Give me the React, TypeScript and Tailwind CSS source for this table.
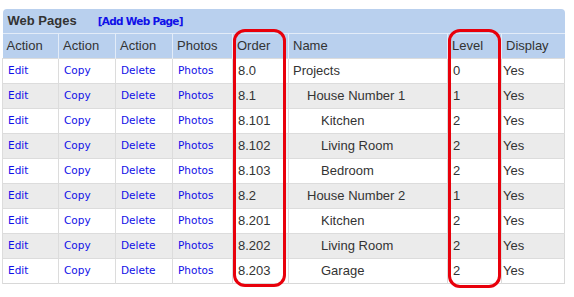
const rows = [
  { order: "8.0", name: "Projects", level: 0 },
  { order: "8.1", name: "House Number 1", level: 1 },
  { order: "8.101", name: "Kitchen", level: 2 },
  { order: "8.102", name: "Living Room", level: 2 },
  { order: "8.103", name: "Bedroom", level: 2 },
  { order: "8.2", name: "House Number 2", level: 1 },
  { order: "8.201", name: "Kitchen", level: 2 },
  { order: "8.202", name: "Living Room", level: 2 },
  { order: "8.203", name: "Garage", level: 2 },
]

const widths = ["w-[56px]", "w-[57px]", "w-[57px]", "w-[60px]", "w-[56px]", "w-[159px]", "w-[54px]", "w-[63px]"]
const headers = ["Action", "Action", "Action", "Photos", "Order", "Name", "Level", "Display"]

const link = "text-[#1010e8] font-['DejaVu_Sans',Verdana,sans-serif] text-[10.5px]"
const indent = ["pl-[4px]", "pl-[18px]", "pl-[32px]"]

export default function App() {
  return (
    <div className="w-[574px] h-[297px] bg-white pt-[9px] pl-[2px] font-['Liberation_Sans',Arial,sans-serif] text-[13px] text-[#333]">
      <div className="relative w-[562px]">
        <table className="w-[562px] table-fixed border-collapse">
          <colgroup>
            {widths.map((w, i) => (
              <col key={i} className={w} />
            ))}
          </colgroup>
          <thead>
            <tr className="h-[24px] bg-[#b9d0ee]">
              <th colSpan={8} className="text-left font-normal rounded-t-[4px] px-[5px]">
                <span className="font-bold text-[13px] text-[#333]">Web Pages</span>
                <span className={`${link} font-bold tracking-[-0.7px] ml-[21px]`}>[Add Web Page]</span>
              </th>
            </tr>
            <tr className="h-[25px] bg-[#b9d0ee] border-t border-[#e3ecf8]">
              {headers.map((h, i) => (
                <th key={i} className="text-left font-normal px-[4px] border-l border-[#e3ecf8] first:border-l-0">
                  {h}
                </th>
              ))}
            </tr>
          </thead>
          <tbody className="border border-[#d8d8d8]">
            {rows.map((r, i) => (
              <tr key={i} className={`h-[25px] border-t border-[#dcdcdc] ${i % 2 ? "bg-[#ebebeb]" : "bg-white"}`}>
                <td className={`px-[5px] border-l border-[#dcdcdc] ${link}`}>Edit</td>
                <td className={`px-[5px] border-l border-[#dcdcdc] ${link}`}>Copy</td>
                <td className={`px-[5px] border-l border-[#dcdcdc] ${link}`}>Delete</td>
                <td className={`px-[5px] border-l border-[#dcdcdc] ${link}`}>Photos</td>
                <td className="px-[5px] border-l border-[#dcdcdc]">{r.order}</td>
                <td className={`${indent[r.level]} border-l border-[#dcdcdc]`}>{r.name}</td>
                <td className="px-[5px] border-l border-[#dcdcdc]">{r.level}</td>
                <td className="pl-[1px] border-l border-[#dcdcdc]">Yes</td>
              </tr>
            ))}
          </tbody>
        </table>
        {/* highlight boxes */}
        <div className="absolute left-[231px] top-[20px] w-[53px] h-[258px] border-[3px] border-[#e8000b] rounded-[12px]" />
        <div className="absolute left-[446px] top-[20px] w-[53px] h-[259px] border-[3px] border-[#e8000b] rounded-[12px]" />
      </div>
    </div>
  )
}
